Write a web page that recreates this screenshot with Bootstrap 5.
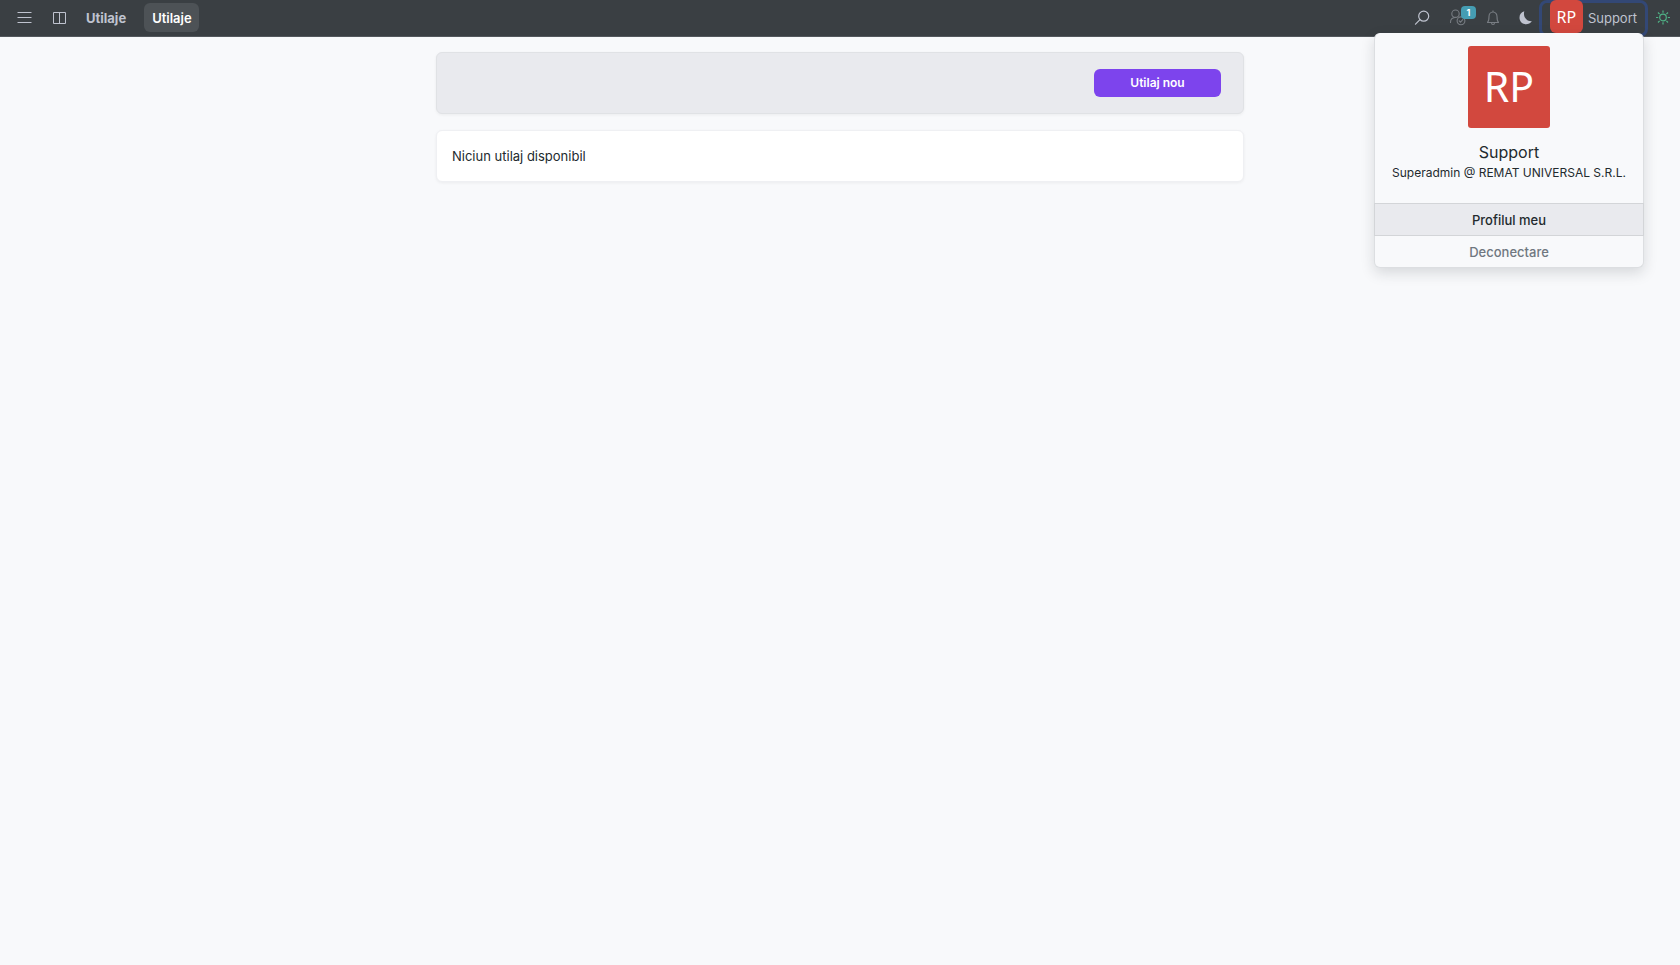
<!DOCTYPE html>
<html lang="ro" data-bs-theme="light">
<head>
<meta charset="utf-8">
<meta name="viewport" content="width=device-width, initial-scale=1">
<title>Utilaje</title>
<link href="https://cdn.jsdelivr.net/npm/bootstrap@5.3.0/dist/css/bootstrap.min.css" rel="stylesheet">
<style>
  body { font-family: Inter, "Liberation Sans", sans-serif; font-size: 13px; line-height: 20px; color: #232a2e; background: #f8f9fb; }
  .topbar { height: 37px; padding: 0 9px 0 16px; background: #3a3f43; border-bottom: 1px solid #53585d; color: #bfc3cf; }
  .topbar button { color: inherit; }
  .topbar .icon-btn { display: flex; padding: 0; border: 0; background: none; }
  .brand-link { font-weight: 700; margin-left: 18px; color: #bfc3cf; text-decoration: none; }
  .tab-link { font-weight: 600; color: #fff; background: #4d5256; border-radius: 6px; padding: 5px 7px 4px 8px; margin: 0 0 1px 18px; text-decoration: none; }
  .topbar .dim { color: #787d83; }
  .action-icons { gap: 19px; margin-right: 6px; }
  .count-badge { top: -3px; left: 12px; width: 15px; height: 13px; border-radius: 4px; background: #459db3; color: #fff; font-size: 9px; line-height: 13px; font-weight: 700; }
  .user-btn { height: 37px; padding: 0 8px 0 8px; margin-right: 7px; border: 3px solid #334876; border-radius: 8px; background: none; }
  .initials { font-family: "Noto Sans", sans-serif; background: #d2483e; color: #fff; }
  .initials-sm { width: 33px; height: 33px; border-radius: 6px; font-size: 16px; line-height: 34px; margin: -4px 5px 0 0; }
  .initials-lg { width: 82px; height: 82px; border-radius: 3px; font-size: 41px; line-height: 80px; }
  .user-menu { top: 33px; right: 36px; width: 270px; border: 1px solid #dcdee1; border-top-color: #f8f9fb; border-radius: 6px; background: #f8f9fb; color: #232a2e; box-shadow: 0 5px 14px rgba(30,35,40,.15); z-index: 10; }
  .menu-head { padding: 12px 8px 21px; }
  .menu-name { font-size: 16px; line-height: 24px; margin-top: 12px; }
  .menu-role { font-size: 12px; line-height: 18px; }
  .menu-row { height: 31px; line-height: 32px; color: #6f7780; font-weight: 500; text-decoration: none; }
  .menu-row.current { height: 33px; color: #232a2e; background: #e9eaee; border: 1px solid #d3d5d8; margin: 0 -1px; }
  .content-col { padding: 15px 16px; }
  .panel { border: 1px solid #e0e2e5; border-radius: 6px; box-shadow: 0 1px 3px rgba(30,35,40,.06); }
  .toolbar-panel { background: #e9eaee; padding: 16px 22px; }
  .list-panel { background: #fff; border-color: #eff0f3; padding: 15px; }
  .new-btn { width: 127px; height: 28px; padding: 0; border: 0; border-radius: 6px; background: #7d44ed; color: #fff; font-size: 12px; font-weight: 600; }
</style>
</head>
<body class="min-vh-100">
<header class="topbar d-flex align-items-center position-relative">
  <button class="icon-btn" type="button" aria-label="Meniu"><svg width="16" height="16" viewBox="0 0 16 16" fill="none" stroke="currentColor"><path d="M1.500 2.500h14M1.500 7.500h14M1.500 12.500h14"/></svg></button>
  <button class="icon-btn ms-3 ps-1" type="button" aria-label="Panouri"><svg width="16" height="14" viewBox="0 0 16 14" fill="none" stroke="currentColor"><path d="M1.500 1.500h12v11h-12zM7.500 1.500v11"/></svg></button>
  <a class="brand-link" href="#">Utilaje</a>
  <a class="tab-link" href="#" aria-current="page">Utilaje</a>
  <div class="d-flex align-items-center ms-auto">
    <div class="action-icons d-flex align-items-center">
      <button class="icon-btn" type="button" aria-label="Caută"><svg width="16" height="16" viewBox="0 0 16 16" fill="none" stroke="currentColor" stroke-width="1.2" stroke-linecap="round"><circle cx="9.700" cy="6.200" r="5"/><path d="M6 9.600 1.500 14.200"/></svg></button>
      <button class="icon-btn dim position-relative" type="button" aria-label="Utilizatori"><svg width="18" height="18" viewBox="0 0 18 18" fill="none" stroke="currentColor" stroke-width="1.1" stroke-linecap="round"><circle cx="6.500" cy="4.700" r="3.700"/><path d="M1.500 13.500c0-3 1.500-4.800 4.500-5"/><circle cx="12" cy="11.800" r="3.900"/><path d="m10.200 11.800 1.300 1.300 2.300-2.500"/></svg><span class="count-badge position-absolute text-center">1</span></button>
      <button class="icon-btn dim" type="button" aria-label="Notificări"><svg width="14" height="16" viewBox="0 0 14 16" fill="none" stroke="currentColor" stroke-width="1.1" stroke-linejoin="round"><path d="M7 .5v1.500M1.500 12.500h11c-1-1-1.500-2-1.500-6 0-2.500-1.500-4.500-4-4.500S3 4 3 6.500c0 4-.5 5-1.500 6zM5.500 12.800c0 2.300 3 2.300 3 0"/></svg></button>
      <button class="icon-btn" type="button" aria-label="Mod întunecat"><svg width="14" height="14" viewBox="0 0 14 14" fill="currentColor"><path d="M5.300.2C1.900 1 .5 3.700.5 6.700c0 3.700 3 6.500 6.500 6.500 2.300 0 4.500-1 5.900-3C8 10.700 3.700 6.200 5.300.2z"/></svg></button>
    </div>
    <button class="user-btn d-flex align-items-center" type="button" aria-expanded="true"><span class="initials initials-sm">RP</span>Support</button>
    <button class="icon-btn" type="button" aria-label="Temă"><svg width="16" height="16" viewBox="0 0 16 16" fill="none" stroke="#4fb286" stroke-width="1.200"><circle cx="8" cy="7.500" r="3.300"/><path d="M8 .5v2.200M8 12.300v2.200M1 7.500h2.200M12.800 7.500H15M3 2.500l1.600 1.600M11.400 10.900l1.600 1.600M3 12.500l1.600-1.600M11.400 4.100 13 2.500"/></svg></button>
  </div>
  <div class="user-menu position-absolute text-center">
    <div class="menu-head d-flex flex-column align-items-center">
      <div class="initials initials-lg">RP</div>
      <div class="menu-name">Support</div>
      <div class="menu-role">Superadmin @ REMAT UNIVERSAL S.R.L.</div>
    </div>
    <a class="menu-row current d-block" href="#">Profilul meu</a>
    <a class="menu-row d-block" href="#">Deconectare</a>
  </div>
</header>
<main class="container-fluid">
  <div class="row justify-content-center">
    <div class="content-col col-12 col-md-6">
      <div class="panel toolbar-panel d-flex justify-content-end mb-3">
        <button class="new-btn" type="button">Utilaj nou</button>
      </div>
      <div class="panel list-panel">Niciun utilaj disponibil</div>
    </div>
  </div>
</main>
</body>
</html>
